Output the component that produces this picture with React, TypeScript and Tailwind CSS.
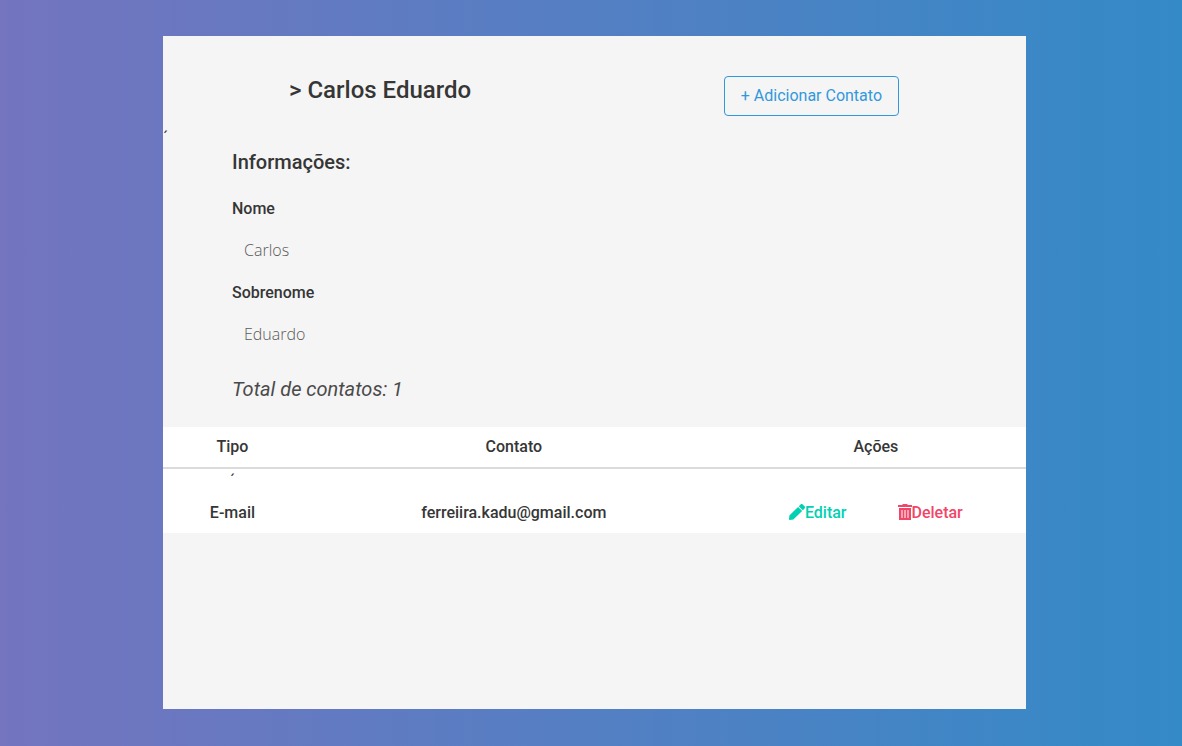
import { FaPen } from "react-icons/fa";

const person = { name: "Carlos", surname: "Eduardo" };
const contacts = [{ type: "E-mail", value: "ferreiira.kadu@gmail.com" }];

function TrashIcon() {
  return (
    <svg viewBox="0 0 14 16" className="mb-0.5 h-4 w-3.5" fill="currentColor" aria-hidden="true">
      <path d="M4.5 0h5v1H14v2H0V1h4.5z" />
      <path d="M1 4h12v12H1z" />
      <path d="M3 6h2v8H3zM6 6h2v8H6zM9 6h2v8H9z" fill="#fff" fillOpacity="0.5" />
    </svg>
  );
}

function Field({ id, label, value }: { id: string; label: string; value: string }) {
  return (
    <div className="flex flex-col gap-2">
      <label htmlFor={id} className="text-base leading-6 font-medium">{label}</label>
      <input
        id={id}
        value={value}
        disabled
        className="h-10 w-full bg-transparent px-3 pt-0.5 font-['Open_Sans',sans-serif] text-base font-light text-[#5a5a5a]"
      />
    </div>
  );
}

export default function App() {
  return (
    <div className="flex min-h-screen flex-col bg-linear-to-r/srgb from-[#7474bf] to-[#348ac7] pt-9 pr-39 pb-[37px] pl-[163px] font-['Roboto',sans-serif] text-[#363636]">
      <main className="flex-1 bg-[#f5f5f5]">
        <header className="flex items-start justify-between pt-10 pr-[127px] pl-[126px]">
          <h1 className="text-2xl leading-7 font-medium">&gt; Carlos Eduardo</h1>
          <button type="button" className="h-10 rounded border border-[#3298dc] px-4 text-base text-[#3298dc]">
            + Adicionar Contato
          </button>
        </header>
        <p className="pt-3 text-base leading-5">´</p>
        <section className="px-[69px]">
          <h2 className="text-xl leading-7 font-medium">Informações:</h2>
          <div className="mt-[21px] flex flex-col gap-3">
            <Field id="nome" label="Nome" value={person.name} />
            <Field id="sobrenome" label="Sobrenome" value={person.surname} />
          </div>
          <p className="mt-[22px] text-xl leading-7 text-[#4a4a4a] italic">Total de contatos: {contacts.length}</p>
        </section>
        <table className="mt-6 w-full table-fixed bg-white text-center text-base leading-6">
          <thead>
            <tr className="border-b-2 border-[#dbdbdb]">
              <th className="w-[16.1%] py-2 font-medium">Tipo</th>
              <th className="py-2 font-medium">Contato</th>
              <th className="w-[34.8%] py-2 font-medium">Ações</th>
            </tr>
          </thead>
          <tbody>
            {contacts.map((c) => (
              <tr key={c.value} className="align-bottom font-medium">
                <td className="pb-2">
                  <span className="block pb-2 font-normal">´</span>
                  {c.type}
                </td>
                <td className="pb-2">{c.value}</td>
                <td className="pb-2">
                  <div className="flex justify-center gap-[51px]">
                    <a href="#editar" className="flex items-center text-[#00d1b2]">
                      <FaPen className="mb-0.5" aria-hidden="true" />
                      Editar
                    </a>
                    <a href="#deletar" className="flex items-center text-[#f14668]">
                      <TrashIcon />
                      Deletar
                    </a>
                  </div>
                </td>
              </tr>
            ))}
          </tbody>
        </table>
      </main>
    </div>
  );
}
